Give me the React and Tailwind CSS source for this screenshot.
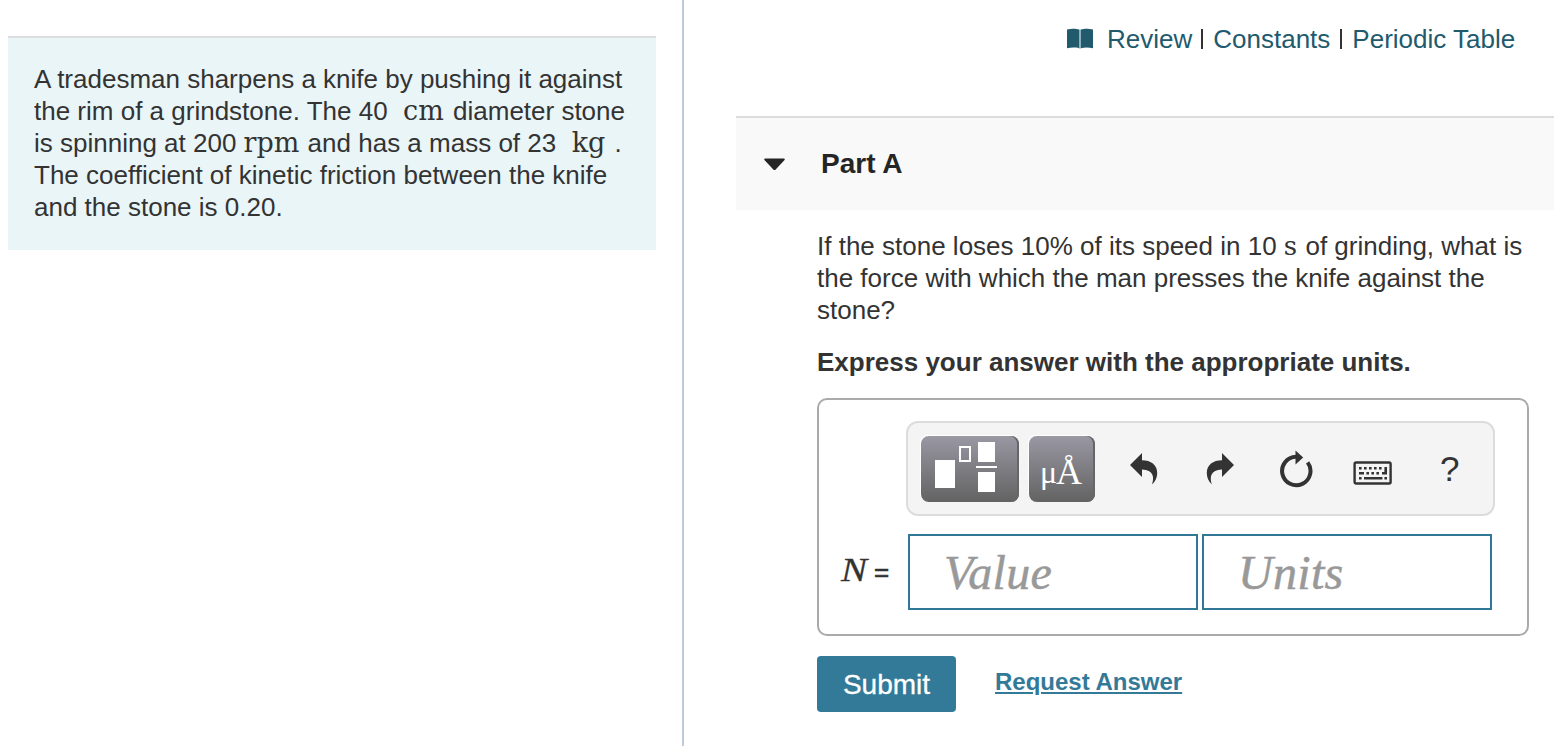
import { useState } from 'react';

const MathUnit = ({ children, className = '' }) => (
  <span className={`inline-block font-['DejaVu_Serif',serif] leading-none ${className}`}>{children}</span>
);

const BookIcon = () => (
  <svg width="26" height="22" viewBox="0 0 26 22">
    <path d="M0 1.6C4 .6 9 .6 12 1.6V20.2C9 19.4 4 19.4 0 20.2Z" fill="#215a6d" />
    <path d="M14 1.6C17 .6 22 .6 26 1.6V20.2C22 19.4 17 19.4 14 20.2Z" fill="#215a6d" />
    <path d="M12 1.6H14V20.6H12Z" fill="#8fb0ba" />
  </svg>
);

const TemplateIcon = () => (
  <svg width="98" height="66" viewBox="0 0 98 66" fill="#fff">
    <rect x="14" y="24" width="20" height="28" />
    <rect x="39" y="11" width="10" height="14" fill="none" stroke="#fff" strokeWidth="2" />
    <rect x="57" y="6" width="17" height="20" />
    <rect x="55" y="30" width="21" height="2" />
    <rect x="57" y="36" width="17" height="20" />
  </svg>
);

const UndoIcon = ({ className = '' }) => (
  <svg className={className} width="28" height="32" viewBox="0 0 28 32" fill="#333">
    <path d="M0 12 12 0V7.3C21 7.3 27.2 12 27.2 20C27.2 24.5 25.5 28.5 22 31.6C24.5 24 23.5 17 12 16.5V24Z" />
  </svg>
);

const ResetIcon = () => (
  <svg width="34" height="38" viewBox="0 0 34 38">
    <path d="M28.6 12.4A14.2 14.2 0 1 1 17 6.8" fill="none" stroke="#333" strokeWidth="4" />
    <path d="M16.5 .5 24.2 7.5 16.5 14.5Z" fill="#333" />
  </svg>
);

const KeyboardIcon = () => (
  <svg width="40" height="24" viewBox="0 0 40 24" fill="#333">
    <rect x="1.6" y="1.5" width="36" height="21" rx="1.5" fill="none" stroke="#333" strokeWidth="2.4" />
    <path d="M6 6h2.6v2.6H6zM11 6h2.6v2.6H11zM16 6h2.6v2.6H16zM21 6h2.6v2.6H21zM26 6h2.6v2.6H26zM31.4 6H34v7.6h-5V11h2.4z" />
    <path d="M6 11h5v2.6H6zM13.4 11H16v2.6h-2.6zM18.4 11H21v2.6h-2.6zM23.4 11H26v2.6h-2.6zM6 16h2.6v2.6H6zM11 16h18.4v2.6H11zM31.4 16H34v2.6h-2.6z" />
  </svg>
);

const problemLine = 'block whitespace-nowrap';
const toolButton =
  'flex items-center justify-center h-[66px] rounded-[8px] bg-linear-to-b from-[#9a98a3] to-[#636363] shadow-[-1px_-1px_0_#fff,inset_-2px_0_0_#666]';
const answerInput =
  "h-[76px] w-[290px] border-2 border-[#317897] bg-white pl-[34px] font-['Liberation_Serif',serif] text-[48px] tracking-[0.3px] italic text-[#333] placeholder:text-[#999] outline-none [-webkit-text-stroke:0.5px_#999]";

const Problem = () => (
  <div className="mt-9 ml-2 h-[214px] w-[648px] border-t-2 border-[#dcdddf] bg-[#eaf5f8] pt-[25px] pl-[26px] text-[26px] leading-8 text-[#333]">
    <span className={problemLine}>A tradesman sharpens a knife by pushing it against</span>
    <span className={problemLine}>
      the rim of a grindstone. The 40&nbsp; <MathUnit className="mr-[2px] ml-px text-[27px]">cm</MathUnit> diameter stone
    </span>
    <span className={problemLine}>
      is spinning at 200 <MathUnit className="mr-px text-[27px]">rpm</MathUnit> and has a mass of 23&nbsp;{' '}
      <MathUnit className="mr-[2px] ml-px text-[27px]">kg</MathUnit> .
    </span>
    <span className={problemLine}>The coefficient of kinetic friction between the knife</span>
    <span className={problemLine}>and the stone is 0.20.</span>
  </div>
);

const Toolbar = () => (
  <div className="flex h-[95px] w-[589px] items-center rounded-[12px] border-2 border-[#dcdcdc] bg-[#f4f4f4] pl-[13px]">
    <button className={`${toolButton} w-[98px]`}>
      <TemplateIcon />
    </button>
    <button className={`${toolButton} ml-[10px] w-[66px] items-baseline pt-[6px] pr-[3px] font-['Liberation_Serif',serif] text-[36px] tracking-[-1px] text-white`}>
      <span className="text-[32px]">μ</span>Å
    </button>
    <button className="ml-[35px]"><UndoIcon /></button>
    <button className="ml-[48px]"><UndoIcon className="-scale-x-100" /></button>
    <button className="ml-[45px]"><ResetIcon /></button>
    <button className="ml-[40px] pt-2"><KeyboardIcon /></button>
    <button className="ml-[47px] font-['Liberation_Sans',Arial,sans-serif] text-[35px] leading-none">?</button>
  </div>
);

const App = () => {
  const [value, setValue] = useState('');
  const [units, setUnits] = useState('');

  return (
    <div className="flex h-[746px] w-[1558px] overflow-hidden bg-white font-['Liberation_Sans',Arial,sans-serif] text-[#333]">
      <aside className="w-[684px] shrink-0 border-r-2 border-[#bdcbdb]">
        <Problem />
      </aside>

      <main className="w-[874px] pl-[52px]">
        <nav className="flex h-[116px] items-start pt-[23px] pl-[331px] text-[26px] leading-8 whitespace-nowrap text-[#215a6d]">
          <span className="mr-[14px] pt-[5px]"><BookIcon /></span>
          <a>Review</a>
          <span className="mr-[10px] ml-[9px] mt-[6px] h-5 w-[2px] bg-[#333]" />
          <a>Constants</a>
          <span className="mx-[10px] mt-[6px] h-5 w-[2px] bg-[#333]" />
          <a>Periodic Table</a>
        </nav>

        <header className="flex h-[94px] w-[818px] items-center border-t-2 border-[#dcdcdc] bg-[#f9f9f9] pl-[28px]">
          <svg width="21" height="13" viewBox="0 0 21 13" fill="#252525">
            <path d="M1.2 .5H19.8C21 .5 21 1.5 20.3 2.3L11.7 11.4Q10.5 12.6 9.3 11.4L.7 2.3C0 1.5 0 .5 1.2 .5Z" />
          </svg>
          <h2 className="ml-[36px] text-[28px] font-bold text-[#252525]">Part A</h2>
        </header>

        <section className="pl-[81px]">
          <p className="pt-5 text-[26px] leading-8">
            <span className={problemLine}>
              If the stone loses 10% of its speed in 10 <MathUnit className="mr-px text-[26px]">s</MathUnit> of grinding, what is
            </span>
            <span className={problemLine}>the force with which the man presses the knife against the</span>
            <span className={problemLine}>stone?</span>
          </p>
          <p className="mt-5 text-[26px] leading-8 font-bold whitespace-nowrap">
            Express your answer with the appropriate units.
          </p>

          <div className="mt-5 h-[238px] w-[712px] rounded-[10px] border-2 border-[#aaa] pt-[21px]">
            <div className="pl-[87px]">
              <Toolbar />
            </div>
            <div className="mt-[18px] flex items-center">
              <label className="flex w-[89px] items-baseline pb-[6px] pl-[22px]">
                <span className="w-[25px] origin-left scale-x-115 font-['Liberation_Serif',serif] text-[34px] italic [-webkit-text-stroke:0.3px_#333]">N</span>
                <span className="ml-[8px] text-[26px] [-webkit-text-stroke:0.6px_#333]">=</span>
              </label>
              <input className={answerInput} placeholder="Value" value={value} onChange={(e) => setValue(e.target.value)} />
              <input className={`${answerInput} ml-1`} placeholder="Units" value={units} onChange={(e) => setUnits(e.target.value)} />
            </div>
          </div>

          <div className="mt-5 flex">
            <button className="h-14 w-[139px] rounded-[4px] bg-[#337a99] pt-px text-[28px] text-white [-webkit-text-stroke:0.3px_#fff]">Submit</button>
            <a className="ml-[39px] pt-[10px] text-[24px] leading-8 font-bold text-[#337a99] underline decoration-2 underline-offset-2">
              Request Answer
            </a>
          </div>
        </section>
      </main>
    </div>
  );
};

export default App;
